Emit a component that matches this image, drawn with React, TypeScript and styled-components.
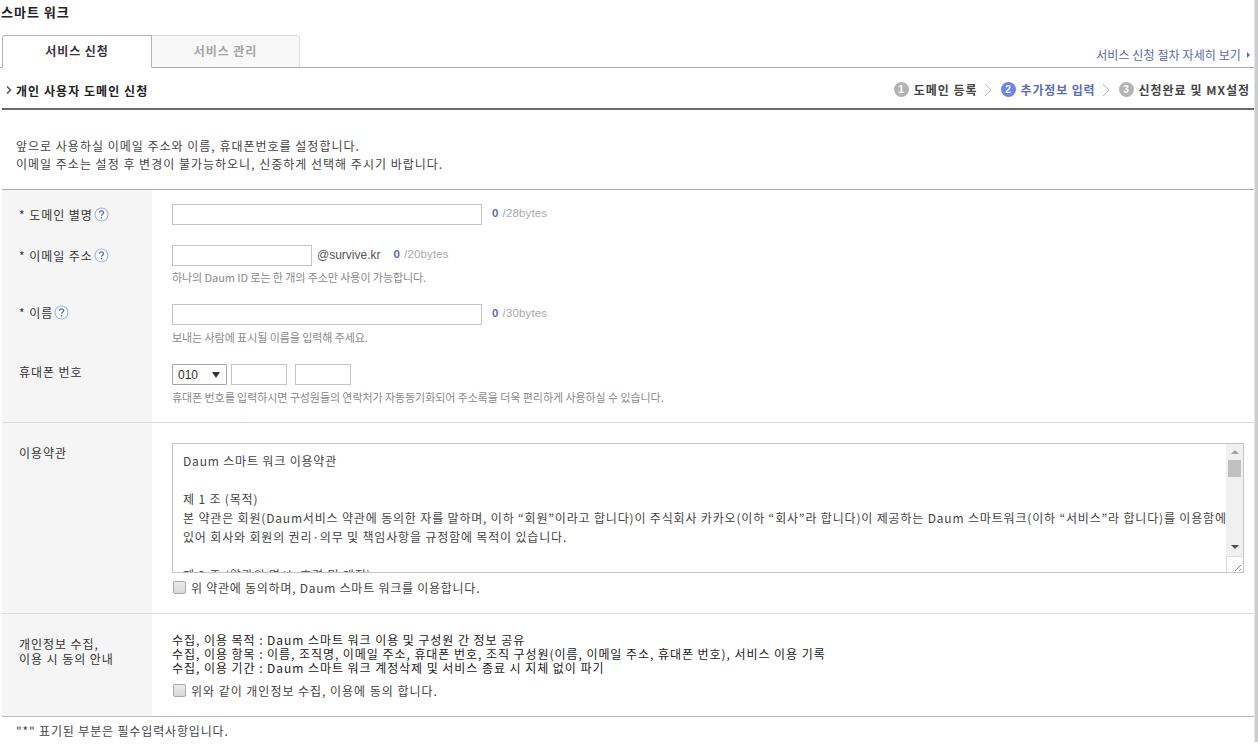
import React from "react";
import styled, { createGlobalStyle } from "styled-components";

const Global = createGlobalStyle`
  html, body { margin: 0; padding: 0; height: 748px; overflow: hidden; background: #fff; }
  body { font-family: "Noto Sans CJK KR", "Liberation Sans", sans-serif; font-size: 12px; color: #333; letter-spacing: 0.95px; }
`;
const Page = styled.div`
  width: 1258px; height: 748px; overflow: hidden; display: flex; background: #fff;
`;
const Main = styled.div`
  width: 1254px; display: flex; flex-direction: column; flex: none;
`;
const EdgeStrip = styled.div`
  width: 4px; height: 742px; flex: none; background: #cccccc; border-left: 1px solid #e8e8e8; box-sizing: border-box;
`;
const Title = styled.h1`
  margin: 0; height: 34px; padding: 2px 0 0 1px; box-sizing: border-box; font-size: 13px; line-height: 20px; font-weight: 700; color: #222; letter-spacing: 1px;
`;
const TabBar = styled.div`
  height: 34px; box-sizing: border-box; padding-left: 2px; display: flex; align-items: flex-end;
  border-bottom: 1px solid #aaa; position: relative;
`;
const Tab = styled.div<{ $active?: boolean }>`
  height: 33px; margin-bottom: -1px; box-sizing: border-box; text-align: center; line-height: 29px;
  width: ${p => (p.$active ? 150 : 148)}px; font-weight: 700; font-size: 12px;
  background: ${p => (p.$active ? "#fff" : "#f8f8f8")};
  color: ${p => (p.$active ? "#3a3040" : "#a5a5a5")};
  border: 1px solid ${p => (p.$active ? "#b5b5b5" : "#ddd")};
  border-bottom: ${p => (p.$active ? "1px solid #fff" : "1px solid #aaa")};
  border-left-width: ${p => (p.$active ? 1 : 0)}px;
  border-radius: ${p => (p.$active ? "3px 0 0 0" : "0 3px 0 0")};
`;
const ProcessLink = styled.a`
  margin-left: auto; margin-right: 4px; margin-bottom: 4px; display: flex; align-items: center; gap: 6px;
  font-size: 12px; line-height: 16px; color: #5a68a8; letter-spacing: 0.1px;
`;
const LinkArrow = styled.span`
  width: 0; height: 0; border-left: 3px solid #5a68a8; border-top: 3px solid transparent; border-bottom: 3px solid transparent;
`;
const HeadRow = styled.div`
  margin-left: 2px; height: 42px; box-sizing: border-box; border-bottom: 2px solid #6a6a6a;
  display: flex; align-items: center; justify-content: space-between; padding: 3px 4px 0 4px;
`;
const HeadTitle = styled.h2`
  margin: 1px 0 0; font-size: 12px; font-weight: 700; color: #222; display: flex; align-items: center; gap: 4px; letter-spacing: 1.05px;
`;
const Steps = styled.div`
  display: flex; align-items: center; gap: 5px;
`;
const StepNum = styled.span<{ $on?: boolean }>`
  width: 15px; height: 15px; border-radius: 50%; background: ${p => (p.$on ? "#6b85e8" : "#b4b4b4")};
  color: #fff; font: 700 10px/15px "Liberation Sans", sans-serif; letter-spacing: 0; text-align: center; flex: none;
`;
const StepText = styled.span<{ $on?: boolean }>`
  font-weight: 700; font-size: 12px; letter-spacing: ${p => (p.$on ? 0.85 : 1)}px; color: ${p => (p.$on ? "#5a6cb8" : "#444")};
`;
const Chevron = styled.svg`
  width: 9px; height: 14px; margin: 0 3px 0 1px; flex: none;
`;
const HeadArrow = styled.svg`
  width: 6px; height: 8px; flex: none;
`;
const Intro = styled.div`
  margin-left: 2px; height: 80px; box-sizing: border-box; padding: 27px 14px 0; line-height: 18px; letter-spacing: 1px;
  color: #444; border-bottom: 1px solid #aaa;
`;
const Section = styled.div<{ $h: number; $line?: string }>`
  margin-left: 2px; height: ${p => p.$h}px; box-sizing: border-box; display: grid; grid-template-columns: 150px 1fr;
  border-bottom: 1px solid ${p => p.$line || "#ddd"};
`;
const LabelCol = styled.div`
  background: #f5f5f5; padding-left: 17px; display: flex; flex-direction: column; color: #333;
`;
const FieldCol = styled.div<{ $top?: number }>`
  padding: ${p => p.$top || 0}px 0 0 20px; display: flex; flex-direction: column; min-height: 0;
`;
const LabelRow = styled.div<{ $h: number; $top?: number }>`
  height: ${p => p.$h}px; padding-top: ${p => p.$top || 0}px; box-sizing: border-box; display: flex; gap: 1px; line-height: 18px; flex: none;
`;
const LabelBlock = styled.div`
  padding-top: 22px; line-height: 15px;
`;
const Help = styled.svg`
  width: 15px; height: 15px; flex: none; margin-top: 1px;
`;
const FieldRow = styled.div<{ $h: number; $top?: number }>`
  height: ${p => p.$h}px; padding-top: ${p => p.$top || 0}px; box-sizing: border-box; flex: none; display: flex; flex-direction: column;
`;
const Controls = styled.div`
  display: flex; align-items: center; height: 21px;
`;
const Box = styled.input<{ $w: number; $ml?: number }>`
  width: ${p => p.$w}px; height: 21px; margin: 0 0 0 ${p => p.$ml || 0}px; padding: 0; box-sizing: border-box;
  border: 1px solid #c4c4c4; background: #fff; outline: none; display: block;
`;
const Count = styled.span<{ $ml: number }>`
  margin: -3px 0 0 ${p => p.$ml}px; font: 11.5px/14px "Liberation Sans", sans-serif; color: #aaa; letter-spacing: 0.15px;
  b { color: #5a6cb8; margin-right: 4px; }
`;
const Domain = styled.span`
  margin: -2px 0 0 5px; font: 12px/14px "Liberation Sans", sans-serif; color: #555; letter-spacing: 0;
`;
const Hint = styled.div<{ $top?: number }>`
  margin-top: ${p => p.$top ?? 4}px; font-size: 11px; line-height: 16px; color: #8a8a8a; letter-spacing: -0.07px; white-space: nowrap;
`;
const PhoneSelect = styled.div`
  width: 55px; height: 21px; box-sizing: border-box; border: 1px solid #a6a6a6; border-radius: 1px; letter-spacing: 0;
  display: flex; align-items: center; justify-content: space-between; padding: 0 6px 0 5px; font: 12px "Liberation Sans", sans-serif; color: #333;
`;
const SelectArrow = styled.span`
  width: 0; height: 0; border-left: 4px solid transparent; border-right: 4px solid transparent; border-top: 6px solid #333;
`;
const TermsBox = styled.div`
  width: 1072px; height: 130px; flex: none; box-sizing: border-box; border: 1px solid #c4c4c4; display: flex; overflow: hidden;
`;
const TermsText = styled.div`
  flex: 1; min-width: 0; padding: 7px 0 0 10px; line-height: 19px; color: #444; white-space: nowrap; overflow: hidden; letter-spacing: 0.83px;
`;
const TermsLine = styled.div`
  min-height: 19px;
`;
const ScrollBar = styled.div`
  width: 17px; flex: none; background: #f0f0f0; display: flex; flex-direction: column; align-items: center;
`;
const ArrowUp = styled.span`
  margin-top: 6px; width: 0; height: 0; border-left: 4px solid transparent; border-right: 4px solid transparent; border-bottom: 4px solid #a3a3a3;
`;
const Thumb = styled.span`
  margin-top: 6px; width: 13px; height: 17px; background: #c1c1c1;
`;
const ArrowDown = styled.span`
  margin-top: auto; margin-bottom: 7px; width: 0; height: 0; border-left: 4px solid transparent; border-right: 4px solid transparent; border-top: 4px solid #505050;
`;
const Resizer = styled.svg`
  width: 17px; height: 16px; flex: none; background: #fff; border-top: 1px solid #ddd; border-left: 1px solid #ddd; box-sizing: border-box;
`;
const Check = styled.label<{ $top: number; $ls: number }>`
  margin-top: ${p => p.$top}px; display: flex; align-items: center; gap: 5px; height: 18px; color: #444; white-space: nowrap; letter-spacing: ${p => p.$ls}px; flex: none;
`;
const CheckBox = styled.span`
  width: 11px; height: 11px; margin-left: 1px; border: 1px solid #a9a9a9; border-radius: 2px; flex: none;
  background: linear-gradient(#ececec, #d8d8d8);
`;
const Notice = styled.div`
  line-height: 14px; color: #222; white-space: nowrap; padding-top: 19px;
`;
const Foot = styled.div`
  padding: 6px 0 0 16px; line-height: 16px; color: #444; letter-spacing: 0.85px;
`;

const HelpIcon = () => (
  <Help viewBox="0 0 15 15">
    <circle cx="7.5" cy="7.5" r="6.5" fill="#fff" stroke="#a9b6e4" strokeWidth="1.2" />
    <path d="M5.4 5.8c0-1.3 1-2 2.1-2s2.1.7 2.1 1.9c0 1.5-2.1 1.5-2.1 3" fill="none" stroke="#5a6cb8" strokeWidth="1.3" />
    <rect x="6.8" y="10" width="1.4" height="1.4" fill="#5a6cb8" />
  </Help>
);
const StepChevron = () => (
  <Chevron viewBox="0 0 9 14"><path d="M1 1l6 6-6 6" fill="none" stroke="#bbb" strokeWidth="1" /></Chevron>
);

export default function App() {
  return (
    <Page>
      <Global />
      <Main>
        <Title>스마트 워크</Title>
        <TabBar>
          <Tab $active>서비스 신청</Tab>
          <Tab>서비스 관리</Tab>
          <ProcessLink>서비스 신청 절차 자세히 보기<LinkArrow /></ProcessLink>
        </TabBar>
        <HeadRow>
          <HeadTitle>
            <HeadArrow viewBox="0 0 6 8"><path d="M1 .5L4.5 4 1 7.5" fill="none" stroke="#555" strokeWidth="1.5" /></HeadArrow>
            개인 사용자 도메인 신청
          </HeadTitle>
          <Steps>
            <StepNum>1</StepNum><StepText>도메인 등록</StepText><StepChevron />
            <StepNum $on>2</StepNum><StepText $on>추가정보 입력</StepText><StepChevron />
            <StepNum>3</StepNum><StepText>신청완료 및 MX설정</StepText>
          </Steps>
        </HeadRow>
        <Intro>
          앞으로 사용하실 이메일 주소와 이름, 휴대폰번호를 설정합니다.<br />
          이메일 주소는 설정 후 변경이 불가능하오니, 신중하게 선택해 주시기 바랍니다.
        </Intro>
        <Section $h={233}>
          <LabelCol>
            <LabelRow $h={57} $top={16}>* 도메인 별명<HelpIcon /></LabelRow>
            <LabelRow $h={57}>* 이메일 주소<HelpIcon /></LabelRow>
            <LabelRow $h={59}>* 이름<HelpIcon /></LabelRow>
            <LabelRow $h={40}>휴대폰 번호</LabelRow>
          </LabelCol>
          <FieldCol>
            <FieldRow $h={55} $top={14}>
              <Controls><Box $w={310} /><Count $ml={10}><b>0</b>/28bytes</Count></Controls>
            </FieldRow>
            <FieldRow $h={59}>
              <Controls><Box $w={140} /><Domain>@survive.kr</Domain><Count $ml={13}><b>0</b>/20bytes</Count></Controls>
              <Hint $top={3}>하나의 Daum ID 로는 한 개의 주소만 사용이 가능합니다.</Hint>
            </FieldRow>
            <FieldRow $h={60}>
              <Controls><Box $w={310} /><Count $ml={10}><b>0</b>/30bytes</Count></Controls>
              <Hint>보내는 사람에 표시될 이름을 입력해 주세요.</Hint>
            </FieldRow>
            <FieldRow $h={50}>
              <Controls><PhoneSelect>010<SelectArrow /></PhoneSelect><Box $w={56} $ml={4} /><Box $w={56} $ml={8} /></Controls>
              <Hint>휴대폰 번호를 입력하시면 구성원들의 연락처가 자동동기화되어 주소록을 더욱 편리하게 사용하실 수 있습니다.</Hint>
            </FieldRow>
          </FieldCol>
        </Section>
        <Section $h={191}>
          <LabelCol><LabelRow $h={40} $top={21}>이용약관</LabelRow></LabelCol>
          <FieldCol $top={20}>
            <TermsBox>
              <TermsText>
                <TermsLine>Daum 스마트 워크 이용약관</TermsLine>
                <TermsLine />
                <TermsLine>제 1 조 (목적)</TermsLine>
                <TermsLine>본 약관은 회원(Daum서비스 약관에 동의한 자를 말하며, 이하 “회원”이라고 합니다)이 주식회사 카카오(이하 “회사”라 합니다)이 제공하는 Daum 스마트워크(이하 “서비스”라 합니다)를 이용함에</TermsLine>
                <TermsLine>있어 회사와 회원의 권리·의무 및 책임사항을 규정함에 목적이 있습니다.</TermsLine>
                <TermsLine />
                <TermsLine>제 2 조 (약관의 명시, 효력 및 개정)</TermsLine>
              </TermsText>
              <ScrollBar>
                <ArrowUp /><Thumb /><ArrowDown />
                <Resizer viewBox="0 0 16 15"><path d="M8 14l6-6M12 14l2-2" stroke="#888" strokeWidth="1" fill="none" /></Resizer>
              </ScrollBar>
            </TermsBox>
            <Check $top={5} $ls={0.75}><CheckBox />위 약관에 동의하며, Daum 스마트 워크를 이용합니다.</Check>
          </FieldCol>
        </Section>
        <Section $h={103} $line="#bbb">
          <LabelCol><LabelBlock>개인정보 수집,<br />이용 시 동의 안내</LabelBlock></LabelCol>
          <FieldCol>
            <Notice>
              수집, 이용 목적 : Daum 스마트 워크 이용 및 구성원 간 정보 공유<br />
              수집, 이용 항목 : 이름, 조직명, 이메일 주소, 휴대폰 번호, 조직 구성원(이름, 이메일 주소, 휴대폰 번호), 서비스 이용 기록<br />
              수집, 이용 기간 : Daum 스마트 워크 계정삭제 및 서비스 종료 시 지체 없이 파기
            </Notice>
            <Check $top={6} $ls={0.97}><CheckBox />위와 같이 개인정보 수집, 이용에 동의 합니다.</Check>
          </FieldCol>
        </Section>
        <Foot>"*" 표기된 부분은 필수입력사항입니다.</Foot>
      </Main>
      <EdgeStrip />
    </Page>
  );
}
